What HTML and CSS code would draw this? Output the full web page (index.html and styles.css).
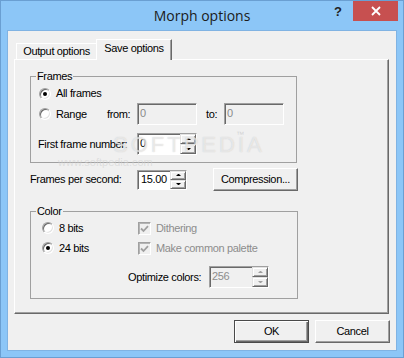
FILE: index.html
```html
<!DOCTYPE html>
<html>
<head>
<meta charset="utf-8">
<link rel="stylesheet" href="styles.css">
</head>
<body>
<div class="window">
  <div class="titlebar">
    <div></div>
    <div class="title">Morph options</div>
    <div class="controls">
      <span class="help">?</span>
      <div class="close"><svg width="10" height="10" viewBox="0 0 10 10"><path d="M1 1L9 9M9 1L1 9" stroke="#fff" stroke-width="1.8"/></svg></div>
    </div>
  </div>
  <div class="client">
    <div class="tabs">
      <div class="tab">Output options</div>
      <div class="tab active">Save options</div>
    </div>
    <div class="panel">
      <fieldset class="group frames">
        <legend>Frames</legend>
        <div class="frames-body">
          <div class="row r1"><label class="radio"><span class="rb on"></span>All frames</label></div>
          <div class="row r2">
            <label class="radio range"><span class="rb"></span>Range</label>
            <span class="lbl from">from:</span>
            <span class="edit disabled">0</span>
            <span class="lbl to">to:</span>
            <span class="edit disabled">0</span>
          </div>
          <div class="row r3">
            <span class="lbl first">First frame number:</span>
            <span class="spin s-first"><span class="spin-text">0</span><span class="spin-btns"><span class="sb up"></span><span class="sb down"></span></span></span>
          </div>
        </div>
      </fieldset>
      <div class="fps-row">
        <span class="lbl fps">Frames per second:</span>
        <span class="spin s-fps"><span class="spin-text">15.00</span><span class="spin-btns"><span class="sb up"></span><span class="sb down"></span></span></span>
        <button class="btn compress">Compression...</button>
      </div>
      <fieldset class="group color">
        <legend>Color</legend>
        <div class="color-body">
          <label class="radio"><span class="rb"></span>8 bits</label>
          <label class="check dis"><span class="cb"><svg width="11" height="11" viewBox="0 0 11 11"><path d="M2 5.5L4.5 8L9 3.2" fill="none" stroke="#a0a0a0" stroke-width="1.8"/></svg></span>Dithering</label>
          <label class="radio"><span class="rb on"></span>24 bits</label>
          <label class="check dis"><span class="cb"><svg width="11" height="11" viewBox="0 0 11 11"><path d="M2 5.5L4.5 8L9 3.2" fill="none" stroke="#a0a0a0" stroke-width="1.8"/></svg></span>Make common palette</label>
          <div class="opt-row">
            <span class="lbl opt">Optimize colors:</span>
            <span class="spin s-opt disabled"><span class="spin-text">256</span><span class="spin-btns"><span class="sb up"></span><span class="sb down"></span></span></span>
          </div>
        </div>
      </fieldset>
      <div class="watermark"><span class="wm-big">SOFTPEDIA</span><span class="wm-tm">™</span><span class="wm-url">www.softpedia.com</span></div>
    </div>
    <div class="buttons">
      <button class="btn default">OK</button>
      <button class="btn">Cancel</button>
    </div>
  </div>
</div>
</body>
</html>
```
FILE: styles.css
```css
html, body {
  margin: 0;
  padding: 0;
  background: #8cc6f7;
}
body {
  font-family: "Liberation Sans", Arial, sans-serif;
  font-size: 11px;
  letter-spacing: -0.35px;
  line-height: 13px;
  color: #000;
}
.window {
  width: 404px;
  height: 358px;
  box-sizing: border-box;
  border: 1px solid #6a9fd2;
  background: #8cc6f7;
  display: flex;
  flex-direction: column;
}
.titlebar {
  height: 30px;
  flex: none;
  display: grid;
  grid-template-columns: 1fr auto 1fr;
  align-items: center;
}
.title {
  font-family: "Open Sans", sans-serif;
  font-size: 14px;
  letter-spacing: 0;
  color: #1b1b1b;
  line-height: 20px;
}
.controls {
  justify-self: end;
  align-self: start;
  display: flex;
  align-items: flex-start;
  padding-right: 5px;
}
.help {
  font-family: "Liberation Sans", Arial, sans-serif;
  font-weight: bold;
  font-size: 13px;
  letter-spacing: 0;
  color: #222;
  margin-top: 4px;
}
.close {
  width: 45px;
  height: 20px;
  margin-left: 11px;
  background: #c75050;
  display: flex;
  align-items: center;
  justify-content: center;
}
.close svg { display: block; }
.client {
  margin: 0 7px 7px;
  flex: 1;
  background: #f0f0f0;
  box-shadow: 0 0 0 1px #80b3e3;
  padding: 8px 7px 7px 6px;
  display: flex;
  flex-direction: column;
}
.tabs {
  display: flex;
  align-items: flex-end;
  height: 21px;
  margin-left: 2px;
  position: relative;
  z-index: 1;
}
.tab {
  height: 16px;
  width: 80px;
  box-sizing: border-box;
  margin-bottom: 1px;
  border-top: 1px solid #fff;
  border-left: 1px solid #fff;
  display: flex;
  align-items: center;
  justify-content: center;
  background: #f0f0f0;
}
.tab.active {
  height: 21px;
  width: 76px;
  margin-bottom: 0;
  border-right: 1px solid #696969;
  box-shadow: inset -1px 0 0 #a0a0a0;
  padding-bottom: 3px;
}
.panel {
  height: 255px;
  box-sizing: border-box;
  margin-top: -1px;
  border: 1px solid;
  border-color: #fff #696969 #696969 #fff;
  box-shadow: inset -1px -1px 0 #a0a0a0;
  padding: 10px 0 0 15px;
  position: relative;
}
fieldset.group {
  margin: 0;
  padding: 0;
  border: 1px solid #a0a0a0;
  min-width: 0;
  box-sizing: border-box;
}
fieldset.group legend {
  margin-left: 5px;
  padding: 0 1px;
  line-height: 13px;
}
fieldset.frames { width: 267px; }
.frames-body {
  display: flex;
  flex-direction: column;
  padding: 1px 0 7px 7px;
}
.row {
  display: flex;
  align-items: center;
}
.r1 { height: 19px; }
.r2 { height: 22px; }
.r3 { height: 22px; margin-top: 8px; }
.radio, .check {
  display: flex;
  align-items: center;
  gap: 5px;
}
.rb {
  width: 12px;
  height: 12px;
  flex: none;
  box-sizing: border-box;
  border-radius: 50%;
  background: #fff;
  border: 1px solid;
  border-color: #a0a0a0 #fff #fff #a0a0a0;
  box-shadow: inset 1px 1px 0 #696969, inset -1px -1px 0 #e3e3e3;
  position: relative;
}
.rb.on::after {
  content: "";
  position: absolute;
  left: 3px;
  top: 3px;
  width: 4px;
  height: 4px;
  border-radius: 50%;
  background: #000;
}
.frames .radio .rb { margin-left: 1px; }
.range { width: 69px; }
.lbl.from { width: 30px; }
.lbl.to { width: 18px; margin-left: 9px; }
.lbl.first { width: 99px; }
.edit {
  width: 60px;
  height: 22px;
  box-sizing: border-box;
  border: 1px solid;
  border-color: #a0a0a0 #fff #fff #a0a0a0;
  box-shadow: inset 1px 1px 0 #696969;
  padding: 3px 0 0 2px;
  background: #fff;
}
.edit.disabled {
  background: #f0f0f0;
  color: #8a8a8a;
}
.spin {
  display: flex;
  box-sizing: border-box;
  border: 1px solid;
  border-color: #a0a0a0 #fff #fff #a0a0a0;
  box-shadow: inset 1px 1px 0 #696969;
  background: #fff;
}
.spin-text {
  flex: 1;
  padding: 3px 0 0 2px;
}
.spin-btns {
  width: 16px;
  display: flex;
  flex-direction: column;
}
.sb {
  flex: 1;
  box-sizing: border-box;
  background: #f0f0f0;
  border: 1px solid;
  border-color: #e3e3e3 #696969 #696969 #e3e3e3;
  box-shadow: inset 1px 1px 0 #fff, inset -1px -1px 0 #a0a0a0;
  display: flex;
  align-items: center;
  justify-content: center;
}
.sb::after {
  content: "";
  width: 1px;
  height: 0;
  border-left: 2px solid transparent;
  border-right: 2px solid transparent;
}
.sb.up::after { border-bottom: 2px solid #000; }
.sb.down::after { border-top: 2px solid #000; }
.s-first { width: 60px; height: 22px; }
.s-fps { width: 50px; height: 20px; }
.s-fps .spin-text { padding: 2px 0 0 3px; }
.s-opt { width: 60px; height: 22px; }
.spin.disabled { background: #f0f0f0; color: #8d8d8d; }
.spin.disabled .sb.up::after { border-bottom-color: #a0a0a0; }
.spin.disabled .sb.down::after { border-top-color: #a0a0a0; }
.fps-row {
  display: flex;
  align-items: center;
  height: 23px;
  margin-top: 5px;
}
.lbl.fps { width: 107px; }
.btn {
  font: inherit;
  letter-spacing: inherit;
  color: #000;
  width: 75px;
  height: 23px;
  padding: 0;
  box-sizing: border-box;
  background: #f0f0f0;
  border: 1px solid;
  border-color: #fff #696969 #696969 #fff;
  box-shadow: inset -1px -1px 0 #a0a0a0;
}
.btn.compress {
  width: 85px;
  margin-left: 26px;
}
.btn.default {
  border: 1px solid #4a4a4a;
  box-shadow: inset 1px 1px 0 #fff, inset -1px -1px 0 #696969, inset -2px -2px 0 #a0a0a0;
}
fieldset.color {
  width: 268px;
  margin-top: 14px;
}
.color-body {
  display: grid;
  grid-template-columns: 96px auto;
  grid-template-rows: 20px 20px auto;
  align-items: center;
  padding: 0 0 10px 11px;
}
.cb {
  width: 13px;
  height: 13px;
  flex: none;
  box-sizing: border-box;
  border: 1px solid;
  border-color: #a0a0a0 #fff #fff #a0a0a0;
  box-shadow: inset 1px 1px 0 #b4b4b4;
  background: #f0f0f0;
  display: flex;
  align-items: center;
  justify-content: center;
}
.cb svg { display: block; }
.check.dis { color: #8d8d8d; }
.opt-row {
  grid-column: 1 / -1;
  display: flex;
  align-items: center;
  height: 22px;
  margin-top: 8px;
  padding-left: 86px;
}
.lbl.opt { width: 81px; }
.buttons {
  display: flex;
  justify-content: flex-end;
  gap: 6px;
  margin-top: 6px;
  margin-right: -1px;
}
.watermark {
  position: absolute;
  left: 43px;
  top: 72px;
  width: 200px;
  height: 36px;
  pointer-events: none;
  color: rgba(255, 255, 255, 0.55);
  letter-spacing: 0;
}
.wm-big {
  position: absolute;
  left: 55px;
  top: 0;
  font-size: 22px;
  line-height: 26px;
  letter-spacing: 3px;
  text-shadow: 0 0 1px rgba(170, 170, 170, 0.6);
}
.wm-tm {
  position: absolute;
  left: 178px;
  top: -4px;
  font-size: 8px;
  color: rgba(190, 190, 190, 0.6);
}
.wm-url {
  position: absolute;
  left: 0;
  top: 24px;
  font-size: 11px;
  color: rgba(210, 210, 210, 0.6);
}
```
